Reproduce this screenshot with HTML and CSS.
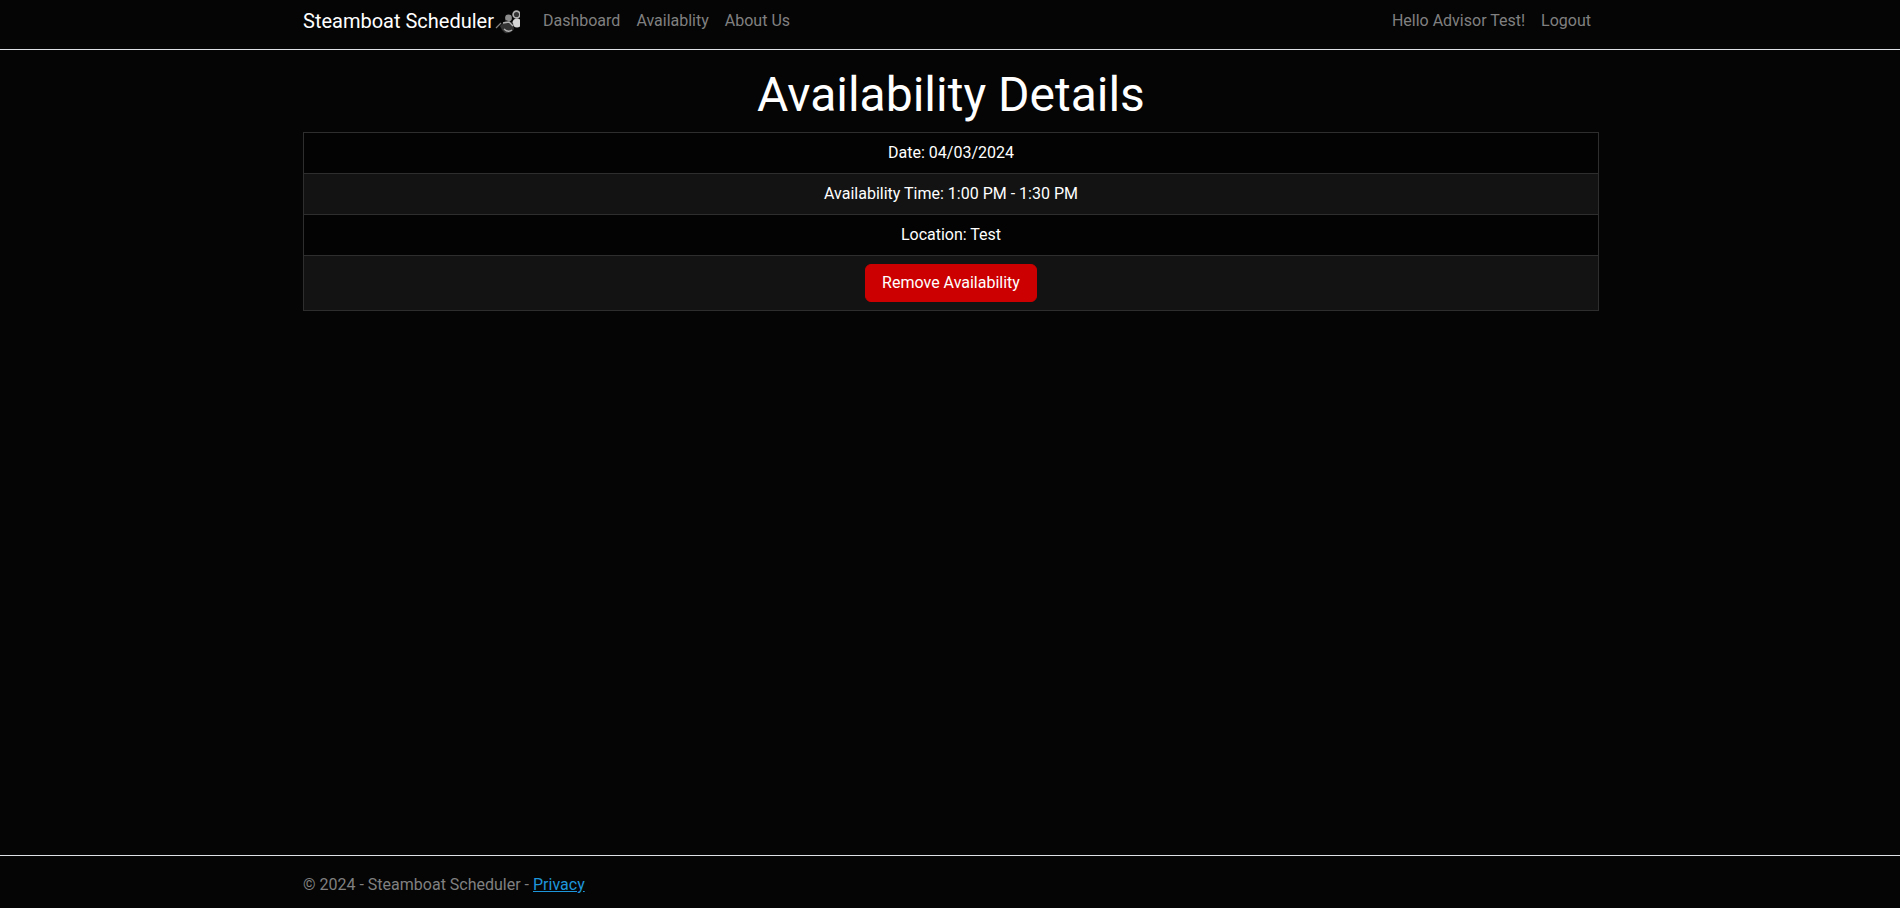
FILE: index.html
```html
<!DOCTYPE html>
<html lang="en">
<head>
<meta charset="UTF-8">
<meta name="viewport" content="width=device-width, initial-scale=1.0">
<title>Availability Details - Steamboat Scheduler</title>
<link rel="stylesheet" href="styles.css">
</head>
<body>
  <header class="site-header">
    <nav class="container navbar">
      <a class="brand" href="#">Steamboat Scheduler<svg class="brand-logo" width="26" height="26" viewBox="0 0 26 26" aria-hidden="true">
        <circle cx="22.5" cy="6.5" r="3.4" fill="#333" stroke="#b0b0b0" stroke-width="1.7"/>
        <circle cx="23" cy="15" r="4.6" fill="#d6d6d6"/>
        <circle cx="14.5" cy="10" r="3.4" fill="#8c8c8c"/>
        <path d="M6 18 L12 12 L19 15 L20 21 Q17 26 11 25 Q8 23 6 18 Z" fill="#333"/>
        <path d="M9 15 L15 14 L19 18 M10 21 Q14 25 18 22" fill="none" stroke="#b0b0b0" stroke-width="1.3"/>
        <path d="M2 20 L7 15" fill="none" stroke="#808080" stroke-width="1.3"/>
      </svg></a>
      <ul class="nav-links">
        <li><a href="#">Dashboard</a></li>
        <li><a href="#">Availablity</a></li>
        <li><a href="#">About Us</a></li>
      </ul>
      <ul class="nav-links nav-right">
        <li><a href="#">Hello Advisor Test!</a></li>
        <li><a href="#">Logout</a></li>
      </ul>
    </nav>
  </header>

  <main class="container content">
    <h1>Availability Details</h1>
    <table class="details">
      <tr><td>Date: 04/03/2024</td></tr>
      <tr><td>Availability Time: 1:00 PM - 1:30 PM</td></tr>
      <tr><td>Location: Test</td></tr>
      <tr><td><button class="btn-remove" type="button">Remove Availability</button></td></tr>
    </table>
  </main>

  <footer class="site-footer">
    <div class="container">&copy; 2024 - Steamboat Scheduler - <a href="#">Privacy</a></div>
  </footer>
</body>
</html>
```

FILE: styles.css
```css
* {
  box-sizing: border-box;
}

body {
  margin: 0;
  min-height: 100vh;
  display: flex;
  flex-direction: column;
  background-color: #050505;
  color: #fff;
  font-family: Roboto, sans-serif;
  font-size: 16px;
  line-height: 24px;
}

.container {
  width: 1320px;
  margin-left: 291px;
  padding: 0 12px;
}

.site-header {
  height: 50px;
  border-bottom: 1px solid #dee2e6;
}

.navbar {
  display: flex;
  align-items: flex-start;
  padding-top: 8px;
}

.brand {
  display: flex;
  align-items: center;
  height: 26px;
  margin-right: 15px;
  color: #fff;
  font-size: 20px;
  line-height: 26px;
  text-decoration: none;
}

.nav-links {
  display: flex;
  margin: 1px 0 0;
  padding: 0;
  list-style: none;
}

.nav-links a {
  display: block;
  padding: 0 8px;
  color: #808080;
  text-decoration: none;
}

.nav-right {
  margin-left: auto;
}

.content {
  flex: 1;
}

h1 {
  margin: 0;
  padding-top: 16px;
  height: 82px;
  font-size: 48px;
  font-weight: 400;
  line-height: 58px;
  text-align: center;
}

.details {
  width: 100%;
  border-spacing: 0;
  border-top: 1px solid #2e2e2e;
  border-left: 1px solid #2e2e2e;
  border-right: 1px solid #2e2e2e;
  text-align: center;
}

.details td {
  padding: 8px;
  border-bottom: 1px solid #2e2e2e;
}

.details tr:nth-child(odd) {
  background-color: #030303;
}

.details tr:nth-child(even) {
  background-color: #131313;
}

.btn-remove {
  display: block;
  height: 38px;
  margin: 0 auto;
  padding: 6px 16px;
  border: 1px solid #cc0000;
  border-radius: 6px;
  background-color: #cc0000;
  color: #fff;
  font-family: inherit;
  font-size: 16px;
  line-height: 24px;
  cursor: pointer;
}

.site-footer {
  height: 53px;
  padding-top: 17px;
  border-top: 1px solid #dee2e6;
  color: #808080;
}

.site-footer a {
  color: #1e96dc;
}
```
